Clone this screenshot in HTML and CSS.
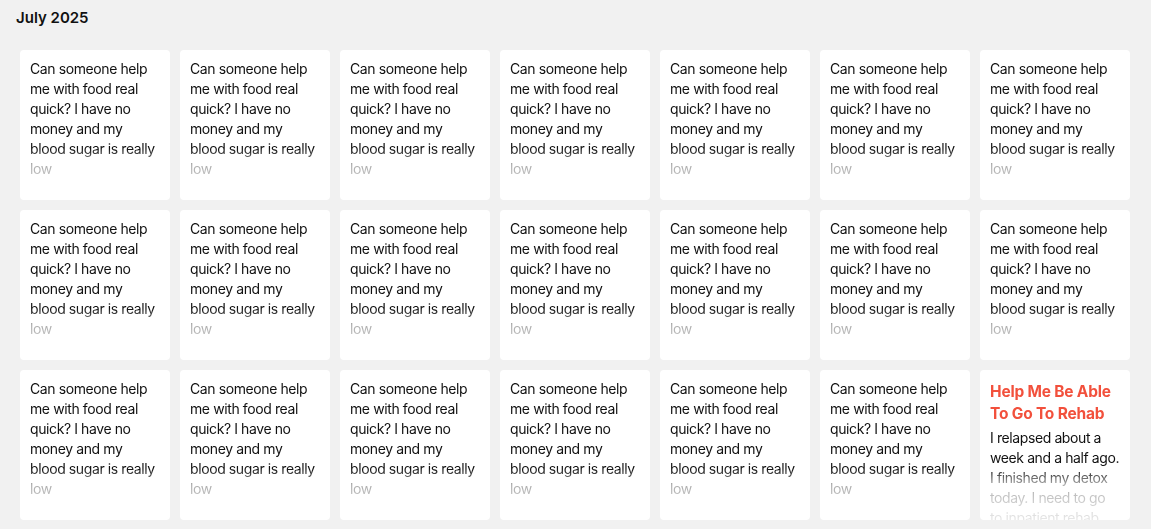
FILE: index.html
```html
<!DOCTYPE html>
<html lang="en">
<head>
<meta charset="utf-8">
<link rel="stylesheet" href="styles.css">
</head>
<body>
<main class="page">
  <h2 class="month">July 2025</h2>
  <div class="grid">
    <div class="card"><div class="content"><p class="body">Can someone help me with food real quick? I have no money and my blood sugar is really low</p></div></div>
    <div class="card"><div class="content"><p class="body">Can someone help me with food real quick? I have no money and my blood sugar is really low</p></div></div>
    <div class="card"><div class="content"><p class="body">Can someone help me with food real quick? I have no money and my blood sugar is really low</p></div></div>
    <div class="card"><div class="content"><p class="body">Can someone help me with food real quick? I have no money and my blood sugar is really low</p></div></div>
    <div class="card"><div class="content"><p class="body">Can someone help me with food real quick? I have no money and my blood sugar is really low</p></div></div>
    <div class="card"><div class="content"><p class="body">Can someone help me with food real quick? I have no money and my blood sugar is really low</p></div></div>
    <div class="card"><div class="content"><p class="body">Can someone help me with food real quick? I have no money and my blood sugar is really low</p></div></div>
    <div class="card"><div class="content"><p class="body">Can someone help me with food real quick? I have no money and my blood sugar is really low</p></div></div>
    <div class="card"><div class="content"><p class="body">Can someone help me with food real quick? I have no money and my blood sugar is really low</p></div></div>
    <div class="card"><div class="content"><p class="body">Can someone help me with food real quick? I have no money and my blood sugar is really low</p></div></div>
    <div class="card"><div class="content"><p class="body">Can someone help me with food real quick? I have no money and my blood sugar is really low</p></div></div>
    <div class="card"><div class="content"><p class="body">Can someone help me with food real quick? I have no money and my blood sugar is really low</p></div></div>
    <div class="card"><div class="content"><p class="body">Can someone help me with food real quick? I have no money and my blood sugar is really low</p></div></div>
    <div class="card"><div class="content"><p class="body">Can someone help me with food real quick? I have no money and my blood sugar is really low</p></div></div>
    <div class="card"><div class="content"><p class="body">Can someone help me with food real quick? I have no money and my blood sugar is really low</p></div></div>
    <div class="card"><div class="content"><p class="body">Can someone help me with food real quick? I have no money and my blood sugar is really low</p></div></div>
    <div class="card"><div class="content"><p class="body">Can someone help me with food real quick? I have no money and my blood sugar is really low</p></div></div>
    <div class="card"><div class="content"><p class="body">Can someone help me with food real quick? I have no money and my blood sugar is really low</p></div></div>
    <div class="card"><div class="content"><p class="body">Can someone help me with food real quick? I have no money and my blood sugar is really low</p></div></div>
    <div class="card"><div class="content"><p class="body">Can someone help me with food real quick? I have no money and my blood sugar is really low</p></div></div>
    <div class="card"><div class="content">
      <h3 class="title">Help Me Be Able To Go To Rehab</h3>
      <p class="body">I relapsed about a week and a half ago. I finished my detox today. I need to go to inpatient rehab</p>
    </div></div>
  </div>
</main>
</body>
</html>
```

FILE: styles.css
```css
html, body {
  margin: 0;
  padding: 0;
  background: #f1f1f1;
}
body {
  font-family: Inter, "Noto Sans", Arial, sans-serif;
  color: #111;
}
.page {
  padding: 8px 0 0 0;
}
.month {
  margin: 0 0 22px 16px;
  font-size: 15px;
  line-height: 20px;
  font-weight: 600;
  color: #111;
}
.grid {
  display: grid;
  grid-template-columns: repeat(7, 150px);
  grid-auto-rows: 150px;
  gap: 10px;
  padding-left: 20px;
}
.card {
  background: #fff;
  border-radius: 4px;
  padding: 9px 10px 0 10px;
  box-sizing: border-box;
  overflow: hidden;
}
.content {
  height: 141px;
  overflow: hidden;
  -webkit-mask-image: linear-gradient(to bottom, #000 0, #000 90px, rgba(0,0,0,.65) 98px, rgba(0,0,0,.35) 106px, rgba(0,0,0,.22) 122px, rgba(0,0,0,.1) 141px);
  mask-image: linear-gradient(to bottom, #000 0, #000 90px, rgba(0,0,0,.65) 98px, rgba(0,0,0,.35) 106px, rgba(0,0,0,.22) 122px, rgba(0,0,0,.1) 141px);
}
.body {
  margin: 0;
  font-size: 14px;
  line-height: 20px;
  letter-spacing: -0.4px;
  color: #111;
}
.title {
  margin: 2px 0 3px 0;
  font-size: 15.5px;
  line-height: 22px;
  font-weight: 700;
  letter-spacing: -0.2px;
  color: #f2503c;
}
```
